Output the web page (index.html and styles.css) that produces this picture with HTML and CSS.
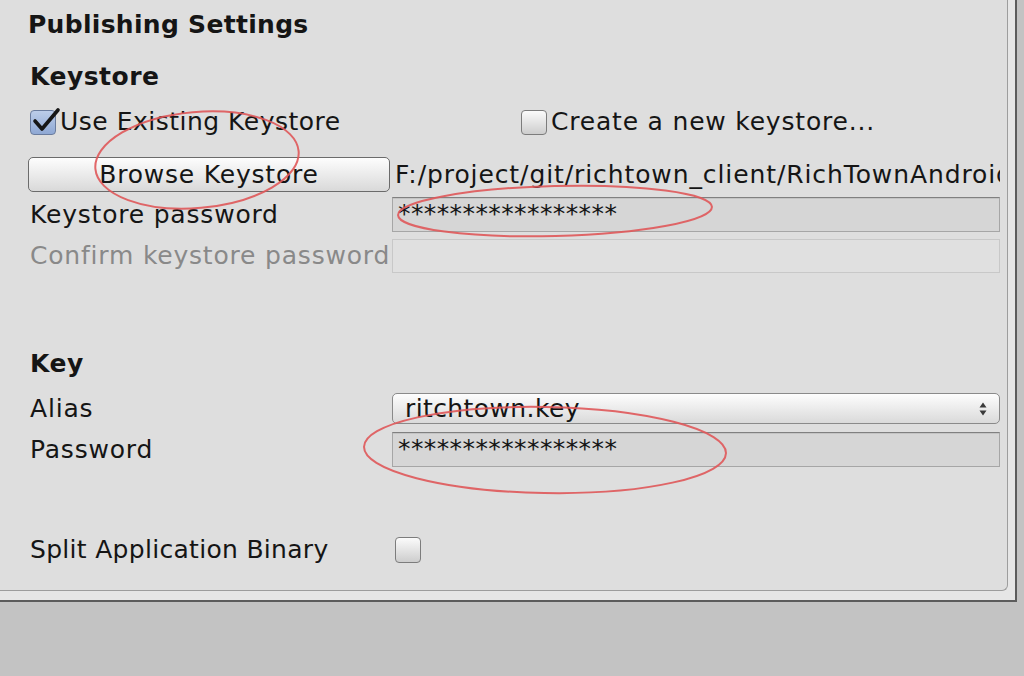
FILE: index.html
```html
<!DOCTYPE html>
<html>
<head>
<meta charset="utf-8">
<link rel="stylesheet" href="styles.css">
</head>
<body>
<div class="frame">
  <div class="panel">
    <div class="title">Publishing Settings</div>
    <div class="section">Keystore</div>
    <div class="check-row">
      <div class="check">
        <span class="box checked"><svg class="tick" width="30" height="26" viewBox="0 0 30 26"><path d="M4 12 L11 20 L27 1" fill="none" stroke="#161616" stroke-width="3.6" stroke-linecap="round" stroke-linejoin="round"/></svg></span>
        <span>Use Existing Keystore</span>
      </div>
      <div class="check">
        <span class="box"></span>
        <span>Create a new keystore...</span>
      </div>
    </div>
    <div class="row browse-row">
      <div class="button">Browse Keystore</div>
      <div class="path">F:/project/git/richtown_client/RichTownAndroid/user.keystore</div>
    </div>
    <div class="row field-row">
      <div class="label">Keystore password</div>
      <div class="field">*****************</div>
    </div>
    <div class="row field-row confirm">
      <div class="label disabled">Confirm keystore password</div>
      <div class="field disabled"></div>
    </div>
    <div class="section key">Key</div>
    <div class="row popup-row">
      <div class="label">Alias</div>
      <div class="popup">
        <span>ritchtown.key</span>
        <svg class="arrows" width="8" height="16" viewBox="0 0 8 16"><path d="M0.5 6.5 L4 1.5 L7.5 6.5 Z M0.5 9.5 L4 14.5 L7.5 9.5 Z" fill="#3a3a3a"/></svg>
      </div>
    </div>
    <div class="row field-row pw-row">
      <div class="label">Password</div>
      <div class="field">*****************</div>
    </div>
    <div class="row split-row">
      <div class="label split-label">Split Application Binary</div>
      <span class="box split-box"></span>
    </div>
    <svg class="annotations" width="1008" height="591" viewBox="0 0 1008 591">
      <ellipse cx="197" cy="160" rx="102" ry="48" transform="rotate(-5 197 160)" />
      <ellipse cx="555" cy="211" rx="157" ry="25" transform="rotate(-1.5 555 211)" />
      <ellipse cx="545" cy="450" rx="181" ry="43" transform="rotate(1 545 450)" />
    </svg>
  </div>
</div>
</body>
</html>
```
FILE: styles.css
```css
body {
  margin: 0;
  background: #c3c3c3;
  font-family: "DejaVu Sans", "Liberation Sans", sans-serif;
  font-size: 25px;
  letter-spacing: 0.8px;
  color: #151515;
}

.frame {
  width: 1008px;
  height: 591px;
  padding: 0 7px 9px 0;
  border-right: 2px solid #5c5c5c;
  border-bottom: 2px solid #5c5c5c;
  background: #e6e6e6;
}

.panel {
  position: relative;
  box-sizing: border-box;
  width: 1008px;
  height: 591px;
  padding: 10px 7px 0 30px;
  background: #dedede;
  border-right: 1px solid #9d9d9d;
  border-bottom: 1px solid #9d9d9d;
  border-bottom-right-radius: 6px;
}

.title {
  font-weight: bold;
  line-height: 30px;
  height: 30px;
  margin-left: -2px;
  letter-spacing: 0.3px;
}

.section {
  font-weight: bold;
  line-height: 30px;
  height: 30px;
  margin-top: 22px;
  letter-spacing: 0.5px;
}

.section.key {
  margin-top: 76px;
}

.check-row {
  display: grid;
  grid-template-columns: 491px 1fr;
  align-items: center;
  height: 30px;
  margin-top: 15px;
}

.check {
  display: flex;
  align-items: center;
  gap: 4px;
  line-height: 30px;
  white-space: nowrap;
}

.check:first-child {
  letter-spacing: 0.5px;
}

.box {
  position: relative;
  flex: none;
  display: block;
  width: 26px;
  height: 25px;
  box-sizing: border-box;
  border: 1px solid #7c7c7c;
  border-radius: 4px;
  background: linear-gradient(#fbfbfb, #cdcdcd);
}

.box.checked {
  border-color: #6a7c9e;
  background: linear-gradient(#bccde9, #8fa8d4);
}

.tick {
  position: absolute;
  left: 0;
  top: -2px;
  overflow: visible;
}

.row {
  display: grid;
  grid-template-columns: 362px 1fr;
  align-items: center;
}

.label {
  line-height: 30px;
  white-space: nowrap;
}

.label.disabled {
  color: #898989;
}

.split-label {
  letter-spacing: 0.3px;
}

.browse-row {
  height: 35px;
  margin-top: 20px;
}

.button {
  width: 362px;
  height: 35px;
  margin-left: -2px;
  box-sizing: border-box;
  border: 1px solid #6b6b6b;
  border-radius: 5px;
  background: linear-gradient(#fdfdfd, #d9d9d9);
  display: flex;
  align-items: center;
  justify-content: center;
  line-height: 30px;
}

.path {
  padding-left: 3px;
  white-space: nowrap;
  overflow: hidden;
  line-height: 30px;
  letter-spacing: 0.9px;
}

.field-row {
  height: 35px;
  margin-top: 5px;
}

.field {
  height: 35px;
  box-sizing: border-box;
  border: 1px solid #a6a6a6;
  border-top-color: #808080;
  background: #d6d6d6;
  box-shadow: inset 0 1px 0 #c4c4c4;
  padding-left: 5px;
  line-height: 32px;
  white-space: nowrap;
  overflow: hidden;
  letter-spacing: 0.4px;
}

.confirm {
  height: 34px;
  margin-top: 7px;
}

.confirm .field {
  height: 34px;
}

.field.disabled {
  background: #e0e0e0;
  border-color: #c8c8c8;
  box-shadow: none;
}

.popup-row {
  height: 31px;
  margin-top: 14px;
}

.popup {
  height: 31px;
  box-sizing: border-box;
  border: 1px solid #8a8a8a;
  border-radius: 5px;
  background: linear-gradient(#fdfdfd, #dadada);
  display: flex;
  align-items: center;
  justify-content: space-between;
  padding: 0 12px 0 12px;
  line-height: 29px;
  letter-spacing: 0.4px;
}

.arrows {
  flex: none;
}

.pw-row {
  margin-top: 8px;
}

.split-row {
  height: 30px;
  margin-top: 68px;
}

.split-box {
  width: 26px;
  height: 26px;
  margin-left: 3px;
}

.annotations {
  position: absolute;
  left: 0;
  top: 0;
  pointer-events: none;
  fill: none;
  stroke: #e0585a;
  stroke-width: 2;
  opacity: 0.9;
}
```
